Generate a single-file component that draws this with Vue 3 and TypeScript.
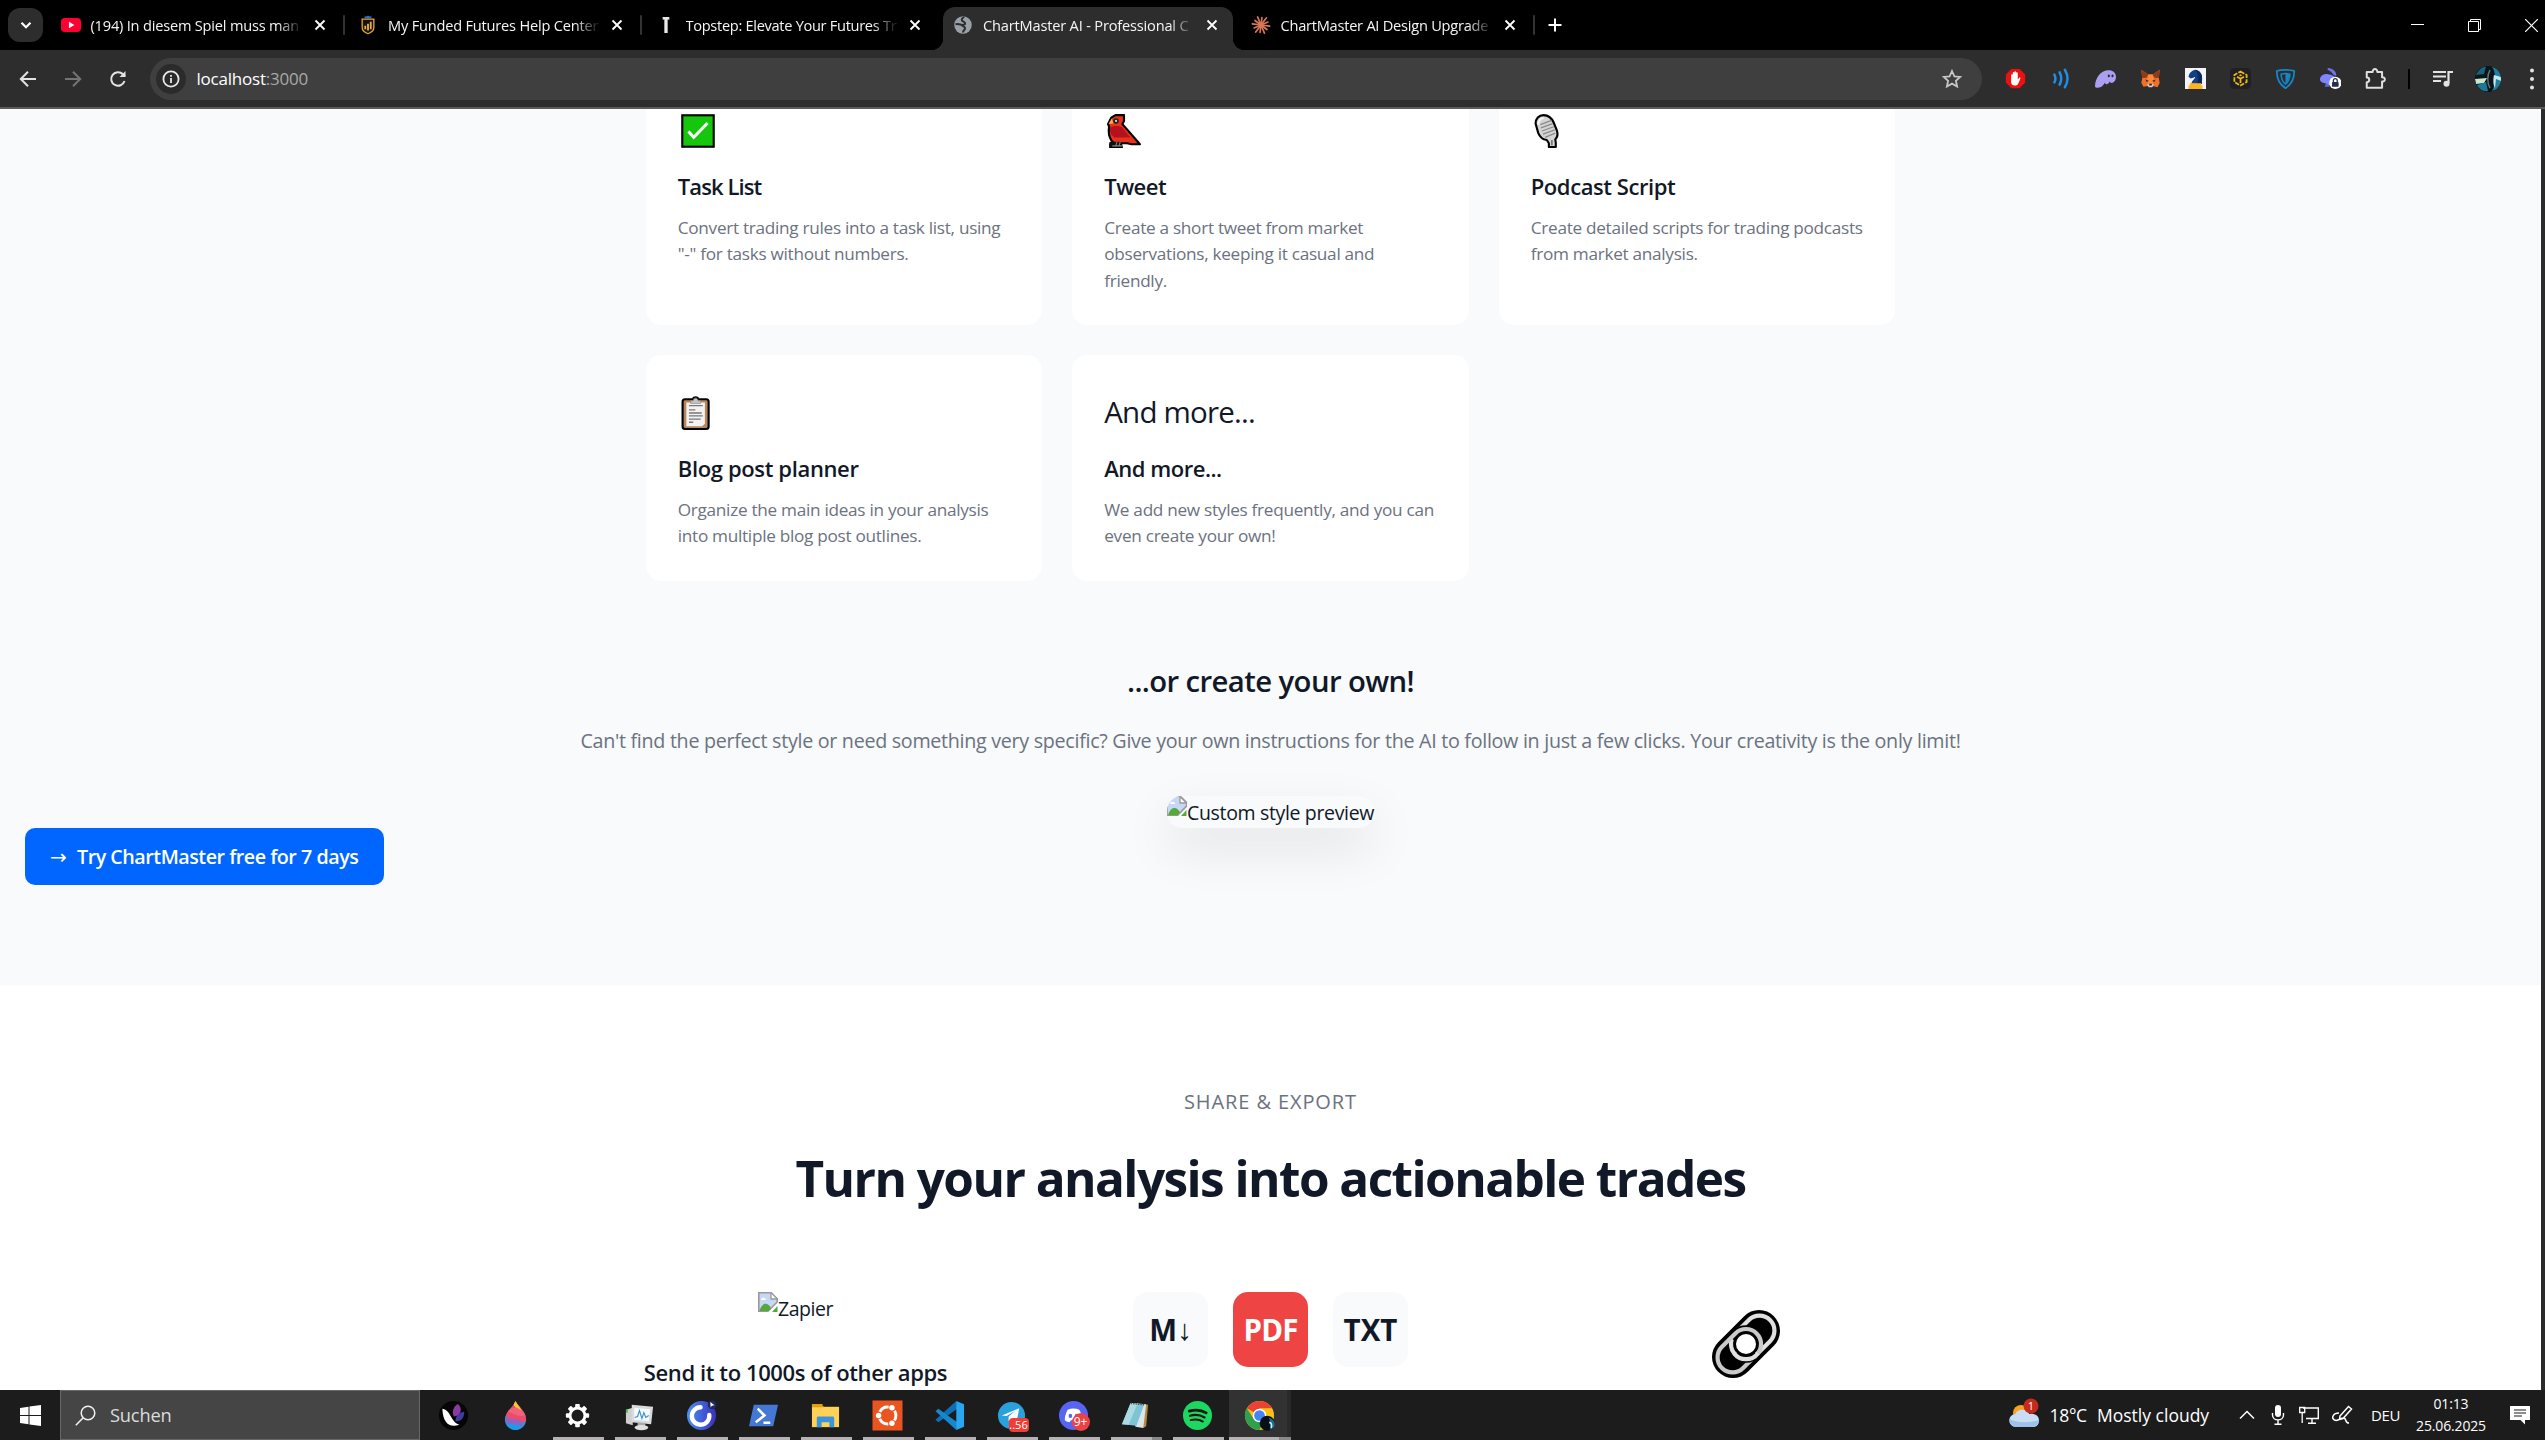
<script setup lang="ts">
interface Tab { icon: string; title: string; track: number; active?: boolean; line?: boolean }
interface StyleCard { icon?: string; emoji?: string; title: string; text: string; track: number }
interface App { icon: string; running?: boolean; active?: boolean; badge?: string; stacked?: boolean }

const tabs: Tab[] = [
  { icon: 'youtube', title: '(194) In diesem Spiel muss man', track: -0.2, line: true },
  { icon: 'funded', title: 'My Funded Futures Help Center', track: -0.2, line: true },
  { icon: 'topstep', title: 'Topstep: Elevate Your Futures Tr', track: -0.3 },
  { icon: 'globe', title: 'ChartMaster AI - Professional C', track: -0.18, active: true },
  { icon: 'claude', title: 'ChartMaster AI Design Upgrade', track: -0.24, line: true },
]

const extensions = ['adblock', 'waves', 'phantom', 'metamask', 'chess', 'cube', 'shield', 'rabbit', 'puzzle']

const cards: StyleCard[] = [
  { icon: 'check', title: 'Task List', text: 'Convert trading rules into a task list, using "-" for tasks without numbers.', track: -0.9 },
  { icon: 'bird', title: 'Tweet', text: 'Create a short tweet from market observations, keeping it casual and friendly.', track: -0.5 },
  { icon: 'mic', title: 'Podcast Script', text: 'Create detailed scripts for trading podcasts from market analysis.', track: -0.42 },
  { icon: 'clipboard', title: 'Blog post planner', text: 'Organize the main ideas in your analysis into multiple blog post outlines.', track: -0.36 },
  { emoji: 'And more...', title: 'And more...', text: 'We add new styles frequently, and you can even create your own!', track: -0.48 },
]

const apps: App[] = [
  { icon: 'petals' },
  { icon: 'drop' },
  { icon: 'gear', running: true },
  { icon: 'monitor', running: true },
  { icon: 'ring', running: true },
  { icon: 'powershell', running: true },
  { icon: 'folder', running: true },
  { icon: 'ubuntu', running: true },
  { icon: 'vscode', running: true },
  { icon: 'telegram', running: true, badge: '..56' },
  { icon: 'discord', running: true, badge: '9+' },
  { icon: 'notepad', running: true, stacked: true },
  { icon: 'spotify', running: true },
  { icon: 'chrome', running: true, active: true, stacked: true },
]

const rays = Array.from({ length: 12 }, (_, i) => {
  const a = (i * Math.PI) / 6 + 0.12
  const r = i % 2 ? 9 : 10.5
  return `<path d="M12 12L${(12 + r * Math.cos(a)).toFixed(2)} ${(12 + r * Math.sin(a)).toFixed(2)}"/>`
}).join('')

const teeth = Array.from({ length: 8 }, (_, i) => `<rect x="13.6" y="4" width="4.8" height="5" rx="1" transform="rotate(${i * 45} 16 16)"/>`).join('')

// Inner markup of each glyph; browser glyphs use a 24 unit box, taskbar and emoji glyphs a 32 unit box.
const glyphs: Record<string, string> = {
  youtube: '<rect x="0" y="3.5" width="24" height="17" rx="4.5" fill="#ff0033"/><path d="M9.5 8.2L16 12l-6.5 3.8z" fill="#fff"/>',
  funded: '<path d="M8 .5l1.5 1.5L12 .5 14.500 2 16 .5v3.500H8z" fill="#2d6fd0"/><path d="M5 5h14v10c0 4-3 6-7 7.500C8 21 5 19 5 15z" fill="#191204" stroke="#dfa73b" stroke-width="1.600"/><path d="M8.700 17v-4M12 18.500v-8M15.300 17V8" stroke="#e5b04a" stroke-width="2.200"/>',
  topstep: '<path d="M8 2.500h8v3.200l-2-.4v16.200h-4V5.300L8 5.700z" fill="#e8e8e8"/>',
  globe: '<circle cx="12" cy="12" r="10.500" fill="#9aa0a9"/><path d="M13.500 2.500c-3 1-3.500 3-2.500 4.500 1.300 1.200 3.500 1 3.500 3 0 1.500-1.500 2-3 2-1.700 0-3-1.500-8.500-1M11 12c0 2.500 3.500 1.500 3.500 4 0 2-2.500 2-2.500 5" fill="none" stroke="#2d2d2d" stroke-width="2.400"/>',
  claude: `<g stroke="#d97757" stroke-width="2" stroke-linecap="round">${rays}</g>`,
  adblock: '<path d="M7.300 1h9.400L23 7.300v9.400L16.700 23H7.300L1 16.700V7.300z" fill="#ed1010"/><path d="M7 13V8a.9.9 0 0 1 1.900 0V5.500a.9.9 0 0 1 1.900 0V4.800a.9.9 0 0 1 1.900 0v1a.9.9 0 0 1 1.900 0V13l1.400-1.600c.8-1 2-.5 1.600.6l-2.400 5.700c-.7 1.600-1.800 2.300-4 2.300-3 0-4.200-1.600-4.200-4z" fill="#fff"/>',
  waves: '<g fill="none" stroke="#1e8fe8" stroke-width="2.800" stroke-linecap="round"><path d="M5 7.500c1.600 3 1.600 6 0 9M11 5c2.400 4.600 2.400 9.400 0 14M17 2c4 6.600 4 13.400 0 20"/></g>',
  phantom: '<path d="M0 21C0 11 7 2.500 15.500 2.500c5 0 8.500 3 8.500 7.500 0 4-2.500 7-5 7-1.200 0-1.700-.6-2-1.500-1 1.800-2.200 3-3.700 3-1.200 0-1.800-.7-2-1.600C9.300 20.500 6.700 22.500 3.500 22.500 1.500 22.500 0 22 0 21z" fill="#ab9ff2"/><ellipse cx="15.800" cy="9" rx="1.200" ry="1.600" fill="#2b2540"/><ellipse cx="20" cy="9" rx="1.200" ry="1.600" fill="#2b2540"/>',
  metamask: '<path d="M1.500 2l8 5.500h5l8-5.500-1 9.500 1 5.500-2.500 5-5.500-1.500h-5L4 21.500 1.500 17l1-5.500z" fill="#f0702a"/><path d="M1.500 2l8 5.500-2 3.500-5 .5zM22.500 2l-8 5.500 2 3.500 5 .5z" fill="#8f3a18"/><path d="M9.500 7.500h5l1.500 8-2 4h-4l-2-4z" fill="#ff8a3c"/><path d="M6 13l4 1.500-2 1.700zM18 13l-4 1.500 2 1.700z" fill="#26303c"/><path d="M8 18.500h8l-2 3.500h-4z" fill="#d8d0c8"/><path d="M10.500 18h3v2h-3z" fill="#222"/>',
  chess: '<rect width="24" height="24" fill="#f3f5fa"/><path d="M4 10c1-5 4-7 8-8 5 1 8 5 7.500 11-.3 2-.5 3 0 5h-12c0-4 4-5 4-8-2 1-3.500 2-5 2z" fill="#123f85"/><path d="M12 2c5 1 8 5 7.500 11-.3 2-.5 3 0 5h-6c2-5 2-11-1.500-16z" fill="#0a2a5c"/><path d="M5.500 17.500h13v2.500h1.500V24H4v-4h1.500z" fill="#ffb21c"/>',
  cube: '<rect width="24" height="24" rx="5" fill="#1e2026"/><g fill="none" stroke="#f0b90b" stroke-width="2"><path d="M12 4l7 4v8l-7 4-7-4V8z" stroke-dasharray="5 1.500"/><path d="M8 10l4 2.300 4-2.300M12 12.300V17"/></g><path d="M12 7l2 1.200-2 1.200-2-1.200z" fill="#f0b90b"/>',
  shield: '<path d="M2 3.500C6 1.500 18 1.500 22 3.500c0 8-2.500 15-10 19.500C4.500 18.500 2 11.500 2 3.500z" fill="none" stroke="#1487c9" stroke-width="2"/><path d="M7 7c3-1 7-1 10 0 0 4.500-1.500 8.500-5 11.500-3.500-3-5-7-5-11.500z" fill="none" stroke="#1487c9" stroke-width="1.700"/><path d="M12 6.500V18c3-3 4.200-6.500 4.400-10.500z" fill="#1487c9"/>',
  rabbit: '<path d="M9 0c6 .5 10 4 9.500 9l-3-1C14 5.500 12 3.500 8.500 2z" fill="#6d72e8"/><path d="M0 13c0-4 4-6.500 9-6 6 .5 10 4 10 8 0 3-2 5-5 5H6l1-2.500C3 17 0 15.500 0 13z" fill="#7f84ff"/><path d="M5 21.500l3-4 3 4z" fill="#6266d8"/><circle cx="17.500" cy="17" r="7" fill="#fff"/><rect x="13.700" y="16" width="7.600" height="5.500" rx="1" fill="#23324c"/><path d="M15.300 16v-1.700a2.200 2.200 0 0 1 4.400 0V16" fill="none" stroke="#23324c" stroke-width="1.500"/>',
  puzzle: '<path d="M2 4.500h6.800C8.400.2 14.400.2 14 4.500h5.500v6c4.200-.3 4.200 5.300 0 5V22.500H2v-6.300c3.800 0 3.800-5.400 0-5.400z" fill="none" stroke="#dedede" stroke-width="2.300" stroke-linejoin="round"/>',
  check: '<rect x="1.200" y="1.200" width="29.600" height="29.600" fill="#16c60c" stroke="#000" stroke-width="2"/><path d="M7 16.500l5 5.500L25 8.500" fill="none" stroke="#fff" stroke-width="2.800"/>',
  bird: '<path d="M1 9.500L4 3.500 8 1h8v5.500l-1.500 3L31 28.500h-8l-4-1h-6l1 4H3v-3l3-1.500c-4-4-5-9-4-15z" fill="#e8321a" stroke="#000" stroke-width="2" stroke-linejoin="round"/><path d="M2 27l1-1h10l1 5H3z" fill="#111"/><path d="M3 13c3-2.500 8-2 11-.5L22 22H7c-4-3-4.500-5-4-9z" fill="#b4101e"/><path d="M1.500 9.500L4.500 4l1.500 5z" fill="#f9b233"/><circle cx="8.500" cy="6.500" r="2.600" fill="#222"/><circle cx="8.500" cy="6.500" r="1" fill="#ddd"/><path d="M9.500 26l-1.200 4M12.500 26l-1.200 4M5 30h9" stroke="#888" stroke-width="1"/>',
  mic: '<path d="M1.500 9C1.500 4.500 4.500 1 9 1c4.500 0 7.500 2.500 9.500 7l3 7.500c1.200 3.500.5 6.500-1.500 8.500l.5 3V31h-6.500v-3.500L12 24.500C8 24 5.500 21.500 4 18z" fill="#d4d4d4" stroke="#000" stroke-width="2" stroke-linejoin="round"/><g stroke="#8b8b8b" stroke-width="1.200"><path d="M6 10l10.500-4M6.500 13l11-4M7.500 16l11-4M8.500 19l11-4M10.500 22l9.500-4"/></g><path d="M4 10c.3-3.500 2-5.800 5-6.200" fill="none" stroke="#f5f5f5" stroke-width="2"/><path d="M16.800 24.500v5" stroke="#777" stroke-width="1.600"/>',
  clipboard: '<rect x="1.500" y="3" width="24.500" height="28" rx="2.300" fill="#b9855a" stroke="#000" stroke-width="2"/><path d="M5 6h17.500v20l-2.500 2.500H5z" fill="#f2f2f2"/><path d="M9 7V4.500h2.500C11.500 1.500 16 1.500 16 4.500h2.500V7z" fill="#c4c4c4" stroke="#888" stroke-width=".6"/><path d="M11 2.500c.8-2 4.700-2 5.500 0" fill="none" stroke="#000" stroke-width="1.500"/><g stroke="#777" stroke-width="1.200"><path d="M7.500 9h13M7.500 13h6M7.500 16h12M7.500 18.800h13M7.500 21.700h11M7.500 24.700h4"/></g>',
  petals: '<circle cx="16" cy="16" r="15" fill="#050505"/><path d="M16.500 17c-3-5 0-11 4-13 4 3 4 9 0 12z" fill="#8a3aa0"/><path d="M18 22c0-6 4-9.500 9-10 .5 6-3 10-9 10z" fill="#3e3da0"/><path d="M22 25.500C12 29 5 24 4.500 9c4 .5 6 3 8.500 7.500 2 3.500 4 7.500 9 9z" fill="#fff"/>',
  drop: '<path d="M16 1c3 6 11 11 11 19 0 6-5 11-11 11S5 26 5 20C5 13 13 9 16 1z" fill="#1f9be6"/><path d="M16 1c3 6 11 11 11 19l-2 4c-6-6-14 0-19-8C8 10 14 7 16 1z" fill="#ee4a6c"/><path d="M5.500 17c5 5 11 1 16 5 2 2 2.500 4 1 6-5-5-11 0-17-6z" fill="#8e63c7"/><path d="M16 1c1.500 4 5 6 6 10-4 0-6-3-8-6z" fill="#ffc71f"/><path d="M8 12c5 0 8 6 18 4-2-5-6-6-8-8-4 0-7 0-10 4z" fill="#f2637b"/>',
  gear: `<g fill="#fff">${teeth}</g><circle cx="16" cy="16" r="7.700" fill="none" stroke="#fff" stroke-width="3"/>`,
  monitor: '<path d="M2 10l7-2v18l-7-2z" fill="#cfcfcf"/><path d="M2 10h2v3H2z" fill="#37c837"/><path d="M8 5l22 2-2 18-20-2z" fill="#d8dadc"/><path d="M10.500 8l16.500 1.500-1.500 12.500-15-1.500z" fill="#f4fbff"/><path d="M11 18l3-1 2-6 2.500 8 2-6 2 5 3-2" fill="none" stroke="#3a8fc9" stroke-width="1.200"/><path d="M14 23l8 .8v4H14z" fill="#aaa"/><ellipse cx="18" cy="28.500" rx="7" ry="2.700" fill="#e0e0e0"/>',
  ring: '<defs><linearGradient id="ringShade"><stop offset="0" stop-color="#4a90f0"/><stop offset="1" stop-color="#3a2fc0"/></linearGradient></defs><circle cx="16" cy="16" r="15" fill="url(#ringShade)"/><path d="M15 7.500a9 9 0 1 0 9 8" fill="none" stroke="#fff" stroke-width="4.500" stroke-linecap="round"/><circle cx="27" cy="5" r="4.500" fill="#20285c"/><path d="M25 2l4.500 3.500-3 .5-1 2z" fill="#fff"/>',
  powershell: '<path d="M6 5h25l-5 22H1z" fill="#4379d4"/><path d="M10 9l7 7-9 7M16 23.500h7" fill="none" stroke="#fff" stroke-width="2.600"/>',
  folder: '<path d="M2 7h28v21H2z" fill="#ffd257"/><path d="M2 4h11v2l2 1.500H2z" fill="#e3a008"/><path d="M7 28v-9c0-1.500.6-2 2-2h14c1.500 0 2 .6 2 2v9h-5v-5h-8v5z" fill="#3a95de"/>',
  ubuntu: '<rect x=".5" y=".5" width="31" height="31" fill="#e95420"/><circle cx="16" cy="16" r="8.700" fill="none" stroke="#fff" stroke-width="3" stroke-dasharray="11 7.220" stroke-dashoffset="5.500"/><circle cx="6.800" cy="16" r="2.800" fill="#fff"/><circle cx="20.600" cy="8" r="2.800" fill="#fff"/><circle cx="20.600" cy="24" r="2.800" fill="#fff"/>',
  vscode: '<path d="M23 1L1.500 20.500 4.500 23 24 9z" fill="#0f6fb5"/><path d="M23 31L1.500 11.500 4.500 9 24 23z" fill="#1587cf"/><path d="M23 1l8 3.500v23L23 31z" fill="#2aa6f0"/>',
  telegram: '<circle cx="16" cy="16" r="14" fill="#2aa1dc"/><path d="M6 16L24 8.500l-3 15-5.500-4L13 22v-5l7-6-9 5.500z" fill="#fff"/>',
  discord: '<circle cx="16" cy="16" r="15" fill="#5865f2"/><path d="M10 10c4-1.500 8-1.500 12 0 2 3.500 3 7 3 11-2 1.500-3.500 2-5 2l-1.200-2h-5.600L12 23c-1.500 0-3-.5-5-2 0-4 1-7.500 3-11z" fill="#fff"/><ellipse cx="12.800" cy="16.500" rx="1.900" ry="2.200" fill="#5865f2"/><ellipse cx="19.200" cy="16.500" rx="1.900" ry="2.200" fill="#5865f2"/>',
  notepad: '<path d="M12 3l17 2-2 22-3 2z" fill="#b58a3c"/><path d="M11 3l16 1.500-3 24.500-8-1.500z" fill="#d9e6ea"/><path d="M11 3l14 1.500-8 22L2 25z" fill="#7fc4d2"/><path d="M11 3l7 .8L9 25.500 2 25z" fill="#a9dbe3"/><path d="M11 3.500l15 1.500" stroke="#555" stroke-width="1.500" stroke-dasharray="1.500 1"/>',
  spotify: '<circle cx="16" cy="16" r="15" fill="#1ed760"/><g fill="none" stroke="#161616" stroke-linecap="round"><path d="M7.500 11.500c6-1.700 12.500-1.200 17.500 1.800" stroke-width="2.800"/><path d="M8.300 16.300c5-1.400 10.700-.9 15 1.700" stroke-width="2.300"/><path d="M9 20.800c4.300-1.100 9-.7 12.700 1.500" stroke-width="1.900"/></g>',
  chrome: '<circle cx="16" cy="16" r="15" fill="#fbc116"/><path d="M16 16L3 8.500A15 15 0 0 1 29 8.500H16z" fill="#ea4335"/><path d="M3 8.500A15 15 0 0 0 16 31l6-11.500H10z" fill="#30a04e"/><circle cx="16" cy="16" r="7" fill="#fff"/><circle cx="16" cy="16" r="5.500" fill="#4285f4"/><circle cx="24" cy="24" r="7.800" fill="#071018"/><path d="M25.500 18c5 2 7 5 6 9-2 3-5 4-5 4 2-4 1-9-1-13z" fill="#1c6f8c"/><path d="M26 23c2 0 3 3 2 6" stroke="#c8eef5" stroke-width="1.800" fill="none"/>',
}
</script>

<template>
  <div class="screen">
    <header class="tabstrip">
      <div class="tab-search">
        <svg width="14" height="14" viewBox="0 0 14 14"><path d="M2.500 4.800L7 9.300l4.500-4.500" fill="none" stroke="#fff" stroke-width="2.200" /></svg>
      </div>
      <div v-for="t in tabs" :key="t.title" class="tab" :class="{ active: t.active }">
        <svg class="favicon" viewBox="0 0 24 24" v-html="glyphs[t.icon]"></svg>
        <span class="tab-title" :style="{ letterSpacing: t.track + 'px' }">{{ t.title }}</span>
        <svg class="tab-close" viewBox="0 0 12 12"><path d="M1.500 1.500l9 9M10.500 1.500l-9 9" stroke="#fff" stroke-width="1.800" /></svg>
        <i class="tab-line" :class="{ shown: t.line }"></i>
      </div>
      <svg class="new-tab" viewBox="0 0 14 14"><path d="M7 .5v13M.5 7h13" stroke="#fff" stroke-width="2" /></svg>
      <div class="window-controls">
        <span><svg width="13" height="13" viewBox="0 0 13 13"><path d="M0 5.500h13" stroke="#fff" /></svg></span>
        <span><svg width="13" height="13" viewBox="0 0 13 13"><path d="M.5 2.500h10v10H.5zM2.500 2.500v-2h10v10h-2" fill="none" stroke="#fff" /></svg></span>
        <span><svg width="13" height="13" viewBox="0 0 13 13"><path d="M0 0l13 13M13 0L0 13" stroke="#fff" stroke-width="1.200" /></svg></span>
      </div>
    </header>

    <div class="toolbar">
      <svg class="nav" viewBox="0 0 18 18"><path d="M17 9H2M9 1.800L1.800 9 9 16.200" fill="none" stroke="#e3e3e3" stroke-width="2" /></svg>
      <svg class="nav" viewBox="0 0 18 18"><path d="M1 9h15M9 1.800L16.200 9 9 16.200" fill="none" stroke="#747474" stroke-width="2" /></svg>
      <svg class="nav" viewBox="0 0 18 18"><path d="M15.500 11A6.800 6.800 0 1 1 14 4.300l2 2" fill="none" stroke="#e3e3e3" stroke-width="2" /><path d="M16.500 1v6h-6z" fill="#e3e3e3" /></svg>
      <div class="omnibox">
        <span class="site-info">
          <svg width="18" height="18" viewBox="0 0 18 18"><circle cx="9" cy="9" r="7.600" fill="none" stroke="#e8e8e8" stroke-width="1.800" /><path d="M9 8v5M9 5v1.800" stroke="#e8e8e8" stroke-width="1.800" /></svg>
        </span>
        <span class="url">localhost<b>:3000</b></span>
        <svg class="star" viewBox="0 0 20 20"><path d="M10 2l2.400 5.300 5.800.6-4.300 3.900 1.200 5.700-5.100-2.900-5.100 2.900 1.200-5.700L1.800 7.900l5.800-.6z" fill="none" stroke="#c7c7c7" stroke-width="1.800" /></svg>
      </div>
      <div class="extensions">
        <span v-for="e in extensions" :key="e"><svg viewBox="0 0 24 24" v-html="glyphs[e]"></svg></span>
      </div>
      <i class="toolbar-line"></i>
      <svg class="media" viewBox="0 0 20 20"><path d="M0 3h13M0 7.500h13M0 12h8" stroke="#e3e3e3" stroke-width="2" /><path d="M20 3h-4.500v11" fill="none" stroke="#e3e3e3" stroke-width="2.200" /><circle cx="13.500" cy="14.800" r="3" fill="#e3e3e3" /></svg>
      <svg class="avatar" viewBox="0 0 26 26">
        <clipPath id="face"><circle cx="13" cy="13" r="13" /></clipPath>
        <g clip-path="url(#face)">
          <path d="M0 0h26v26H0z" fill="#0b1419" />
          <path d="M1 9C3 4 7 1 11 .5L9 8z" fill="#12657c" /><path d="M0 13l12-1-3 5-8 1z" fill="#c9e6d0" /><path d="M2 19l9-3 2 9c-5 1-9-2-11-6z" fill="#1c7896" />
          <path d="M17 1c4 4 4 18 0 24l9-3V3z" fill="#1f7f9d" /><path d="M15 4c-3 5-3 13 0 18" fill="none" stroke="#5f7076" stroke-width="1.500" /><path d="M19 9l7 2v4l-5-2-1 9c-2-3-2-9-1-13z" fill="#c4e6ec" />
        </g>
      </svg>
      <svg class="more" viewBox="0 0 4 22"><circle cx="2" cy="2.500" r="2" fill="#e3e3e3" /><circle cx="2" cy="11" r="2" fill="#e3e3e3" /><circle cx="2" cy="19.500" r="2" fill="#e3e3e3" /></svg>
    </div>

    <div class="viewport">
      <main class="page">
        <section class="styles">
          <div class="cards">
            <article v-for="c in cards" :key="c.title" class="card">
              <div class="card-icon">
                <svg v-if="c.icon" viewBox="0 0 32 32" v-html="glyphs[c.icon]"></svg>
                <template v-else>{{ c.emoji }}</template>
              </div>
              <h4 :style="{ letterSpacing: c.track + 'px' }">{{ c.title }}</h4>
              <p>{{ c.text }}</p>
            </article>
          </div>
          <h3>...or create your own!</h3>
          <p class="lead">Can't find the perfect style or need something very specific? Give your own instructions for the AI to follow in just a few clicks. Your creativity is the only limit!</p>
          <div class="preview">
            <svg width="20" height="20" viewBox="0 0 20 20"><path d="M0 0h13l6.500 6.500V10L10 20H0z" fill="#c6d8f6" stroke="#9a9a9a" stroke-width="1.600" /><path d="M13 .5V7h6.500z" fill="#fff" stroke="#9a9a9a" stroke-width="1.300" /><path d="M3 8c0-3 5-3 5 0z" fill="#fff" /><path d="M1 19.500c2-9 9-10 12-3l-3 3z" fill="#56a83c" /><path d="M19.500 14v6H14z" fill="#56a83c" /></svg>
            <span>Custom style preview</span>
          </div>
          <a class="cta"><span class="arrow">→</span>Try ChartMaster free for 7 days</a>
        </section>

        <section class="share">
          <div class="eyebrow">SHARE &amp; EXPORT</div>
          <h2>Turn your analysis into actionable trades</h2>
          <div class="share-grid">
            <div class="share-col">
              <div class="broken">
                <svg width="20" height="20" viewBox="0 0 20 20"><path d="M.800.800h12.200l6.200 6.200V10L10 19.200H.800z" fill="#c6d8f6" stroke="#9a9a9a" stroke-width="1.600" /><path d="M13 .5V7h6.500z" fill="#fff" stroke="#9a9a9a" stroke-width="1.300" /><path d="M3 8c0-3 5-3 5 0z" fill="#fff" /><path d="M1.500 19c2-8.500 8.500-9.500 11.500-2.500l-2.500 2.500z" fill="#56a83c" /><path d="M19.500 14v6H14z" fill="#56a83c" /></svg>
                <span>Zapier</span>
              </div>
              <h4>Send it to 1000s of other apps</h4>
            </div>
            <div class="share-col formats">
              <span class="fmt">M<i>↓</i></span>
              <span class="fmt pdf">PDF</span>
              <span class="fmt">TXT</span>
            </div>
            <div class="share-col link">
              <svg width="70" height="70" viewBox="0 0 70 70">
                <g transform="translate(35 35) rotate(-45)" fill="none">
                  <rect x="-39.400" y="-21" width="78.800" height="42" rx="21" fill="#000" />
                  <rect x="-15" y="-15" width="49" height="30" rx="15" stroke="#e0e0e0" stroke-width="4.200" />
                  <path d="M-19-15H0a15 15 0 0 1 0 30H-19a15 15 0 0 1 0-30z" stroke="#000" stroke-width="7.500" stroke-dasharray="0 13 36 200" />
                  <rect x="-34" y="-15" width="49" height="30" rx="15" stroke="#c9c9c9" stroke-width="4.200" />
                  <path d="M-15 0A15 15 0 0 0 0 15" stroke="#000" stroke-width="7.500" />
                  <path d="M-15 -2A15 15 0 0 0 2 15" stroke="#e0e0e0" stroke-width="4.200" />
                  <circle r="10" fill="#fff" />
                </g>
              </svg>
            </div>
          </div>
        </section>
      </main>
      <aside class="edge"></aside>
    </div>

    <footer class="taskbar">
      <div class="start">
        <svg width="21" height="21" viewBox="0 0 21 21" fill="#fff"><path d="M0 3l8.500-1.200V10H0zM9.500 1.600L21 0v10H9.500zM0 11h8.500v8.200L0 18zM9.500 11H21v10L9.500 19.400z" /></svg>
      </div>
      <div class="search">
        <svg width="21" height="21" viewBox="0 0 21 21"><circle cx="13" cy="8" r="6.800" fill="none" stroke="#f0f0f0" stroke-width="1.500" /><path d="M8 13L.8 20.200" stroke="#f0f0f0" stroke-width="1.600" /></svg>
        <span>Suchen</span>
      </div>
      <div v-for="a in apps" :key="a.icon" class="app" :class="{ running: a.running, active: a.active, stacked: a.stacked }">
        <svg viewBox="0 0 32 32" v-html="glyphs[a.icon]"></svg>
        <span v-if="a.badge" class="badge" :class="a.icon">{{ a.badge }}</span>
      </div>
      <div class="tray">
        <svg class="weather" viewBox="0 0 32 32">
          <circle cx="13" cy="15" r="8" fill="#f7a51c" />
          <path d="M8 29a6.500 6.500 0 0 1-.5-13c1-5 11-6.500 13.500 0 6-1 10 2 10 6.500S28 29 25 29z" fill="#c9def5" /><path d="M8 29a6.500 6.500 0 0 1-6-8c6 4 20 4 29 1-.3 4-3 7-6 7z" fill="#9fc2ea" />
          <circle cx="23" cy="8" r="7.500" fill="#c42b1c" />
          <text x="23" y="12" text-anchor="middle" font-family="Open Sans, sans-serif" font-size="11" fill="#fff">1</text>
        </svg>
        <span class="temp">18°C</span>
        <span class="sky">Mostly cloudy</span>
        <svg class="t-chev" viewBox="0 0 16 16"><path d="M1 11.500L8 4.500l7 7" fill="none" stroke="#fff" stroke-width="1.500" /></svg>
        <svg class="t-mic" viewBox="0 0 14 20"><rect x="4" y="0" width="6" height="12" rx="3" fill="#fff" /><path d="M1.500 8v2c0 6.500 11 6.500 11 0V8M7 15v5M3.500 19.300h7" fill="none" stroke="#fff" stroke-width="1.400" /></svg>
        <svg class="t-net" viewBox="0 0 20 20"><path d="M4 3h15.300v10.500H7M13 13.500V18M9 18.300h8" fill="none" stroke="#fff" stroke-width="1.400" /><path d="M.7 2.500h5v5h-5zM3.200 7.500V18" fill="none" stroke="#fff" stroke-width="1.300" /></svg>
        <svg class="t-pen" viewBox="0 0 22 20"><path d="M8 11L16.500 1.500l3 2.500L11 13.500l-3.500 1zM7 8c-6 0-8 5-4.500 7 4 2 6-3 9.500-2 3 1 .5 5 5 5" fill="none" stroke="#fff" stroke-width="1.500" /></svg>
        <span class="lang">DEU</span>
        <div class="clock"><span>01:13</span><span>25.06.2025</span></div>
        <svg class="t-note" viewBox="0 0 20 20"><path d="M0 1h20v14h-5v4.500L10.500 15H0z" fill="#fff" /><path d="M4 5h12M4 8h12M4 11h8" stroke="#1c1c1c" stroke-width="1.200" /></svg>
      </div>
    </footer>
  </div>
</template>

<style>
body { margin: 0; background: #fff; }
</style>

<style scoped>
.screen { width: 2545px; height: 1440px; display: flex; flex-direction: column; overflow: hidden; font-family: "Open Sans", "Noto Sans", sans-serif; color: #111827; }
svg { display: block; flex: none; }
h2, h3, h4, p { margin: 0; }

.tabstrip { height: 50px; flex: none; background: #000; display: flex; align-items: center; overflow: hidden; }
.tab-search { width: 35px; height: 34px; border-radius: 12px; background: #2d2d2d; margin-left: 8px; margin-right: 7.500px; display: flex; align-items: center; justify-content: center; flex: none; }
.tab { width: 297.500px; height: 50px; flex: none; display: flex; align-items: center; position: relative; box-sizing: border-box; padding-left: 10px; }
.tab.active::before { content: ""; position: absolute; left: 0; top: 7px; width: 290px; height: 43px; background: #2d2d2d; border-radius: 12px 12px 0 0; }
.tab.active::after { content: ""; position: absolute; left: -12px; bottom: 0; width: 314px; height: 12px; background: radial-gradient(circle at 0 0, transparent 12px, #2d2d2d 12.500px) left / 12px 12px no-repeat, radial-gradient(circle at 100% 0, transparent 12px, #2d2d2d 12.500px) right / 12px 12px no-repeat; }
.favicon { width: 20px; height: 20px; margin-right: 10px; position: relative; z-index: 1; }
.tab-title { width: 212px; overflow: hidden; white-space: nowrap; font-size: 14.600px; color: #f5f5f5; line-height: 24px; margin-right: -4px; position: relative; z-index: 1; mask-image: linear-gradient(90deg, #000 88%, rgba(0, 0, 0, 0.150) 98%); }
.tab-close { width: 12px; height: 12px; margin-left: 15px; position: relative; z-index: 1; }
.tab-line { width: 2px; height: 20px; margin-left: 17px; border-radius: 1px; }
.tab-line.shown { background: #333; }
.new-tab { width: 14px; height: 14px; margin-left: 10px; }
.window-controls { margin-left: auto; margin-right: -15px; display: flex; flex: none; }
.window-controls span { width: 57px; height: 50px; display: flex; align-items: center; justify-content: center; }

.toolbar { height: 57px; flex: none; background: #2d2d2d; border-bottom: 2px solid #5b5b5b; display: flex; align-items: center; }
.nav { width: 18px; height: 18px; margin-left: 18.500px; margin-right: 8.500px; }
.omnibox { width: 1831.500px; height: 42px; border-radius: 21px; background: #3f3f3f; margin-left: 15px; display: flex; align-items: center; box-sizing: border-box; padding: 0 20px 0 6px; flex: none; }
.site-info { width: 30px; height: 30px; border-radius: 50%; background: #2b2b2b; display: flex; align-items: center; justify-content: center; }
.url { font-size: 17px; letter-spacing: -0.220px; color: #fff; margin-left: 10.500px; line-height: 26px; margin-top: 1px; }
.url b { font-weight: 400; color: #a9a9a9; }
.star { width: 20px; height: 20px; margin-left: auto; }
.extensions { display: flex; margin-left: 11px; }
.extensions span { width: 45.100px; display: flex; justify-content: center; }
.extensions svg { width: 21px; height: 21px; }
.toolbar-line { width: 2px; height: 20px; background: #000; margin-left: 10px; }
.media { width: 20px; height: 20px; margin-left: 23px; }
.avatar { width: 26px; height: 26px; margin-left: 22px; }
.more { width: 4px; height: 22px; margin-left: 29px; }

.viewport { flex: 1; min-height: 0; display: flex; overflow: hidden; }
.page { width: 2541px; flex: none; background: #fff; }
.edge { flex: 1; background: #2b2b2b; }

.styles { background: #f8fafc; height: 876px; box-sizing: border-box; padding-bottom: 100px; display: flex; flex-direction: column; align-items: center; }
.cards { width: 1249.500px; margin-top: -36px; display: grid; grid-template-columns: repeat(3, 1fr); gap: 30px; }
.card { background: #fff; border-radius: 15px; padding: 31px 30.500px 30.800px 32px; }
.card-icon { height: 51px; line-height: 51px; font-size: 29.500px; letter-spacing: -0.800px; display: flex; align-items: center; }
.card-icon svg { width: 34px; height: 34px; margin-left: 3px; position: relative; top: 1px; }
.card h4 { margin-top: 16px; font-size: 22px; line-height: 30px; font-weight: 600; }
.card p { margin-top: 14px; font-size: 17.200px; line-height: 26.400px; letter-spacing: -0.290px; color: #6b7280; }
.styles h3 { margin-top: 80px; font-size: 29.300px; line-height: 40px; font-weight: 600; letter-spacing: -0.600px; }
.lead { margin-top: 24px; font-size: 19.700px; line-height: 32px; letter-spacing: -0.290px; color: #6b7280; white-space: nowrap; }
.preview { margin-top: 39px; width: 207px; height: 32px; border-radius: 15px; box-shadow: 0 20px 50px rgba(0, 0, 0, 0.1); background: #f8fafc; display: flex; font-size: 19.500px; line-height: 34px; letter-spacing: -0.340px; white-space: nowrap; flex: none; }
.preview svg { border-top-left-radius: 15px; }
.cta { align-self: flex-start; margin-left: 25px; width: 359px; height: 57px; box-sizing: border-box; padding-left: 25px; border-radius: 10px; background: #0066ff; color: #fff; display: flex; align-items: center; font-size: 19.700px; font-weight: 600; letter-spacing: -0.480px; white-space: nowrap; flex: none; }
.arrow { width: 27px; font-family: "DejaVu Sans", sans-serif; font-size: 20px; font-weight: 400; padding-top: 1px; }

.share { padding-top: 101px; display: flex; flex-direction: column; align-items: center; }
.eyebrow { font-size: 20px; line-height: 32px; letter-spacing: 0.900px; color: #6b7280; }
.share h2 { margin-top: 30px; font-size: 49.500px; line-height: 60px; font-weight: 700; letter-spacing: -1.550px; }
.share-grid { margin-top: 84px; width: 1375px; display: grid; grid-template-columns: repeat(3, 1fr); gap: 50px; }
.share-col { display: flex; flex-direction: column; align-items: center; }
.broken { display: flex; height: 32px; line-height: 34px; font-size: 19.500px; letter-spacing: -0.500px; }
.share-col h4 { margin-top: 30px; font-size: 22px; line-height: 36px; font-weight: 600; letter-spacing: -0.400px; }
.formats { flex-direction: row; align-items: flex-start; justify-content: center; gap: 25px; }
.fmt { width: 75px; height: 75px; border-radius: 15px; background: #f8fafc; display: flex; align-items: center; justify-content: center; font-size: 29.500px; font-weight: 700; }
.fmt i { font-style: normal; font-weight: 400; font-family: "Liberation Serif", serif; font-size: 29px; line-height: 30px; }
.fmt.pdf { background: #ef4444; color: #fff; letter-spacing: -0.800px; }
.link { padding-top: 17px; }

.taskbar { height: 50px; flex: none; background: #1c1c1c; display: flex; align-items: stretch; overflow: hidden; }
.start { width: 60px; display: flex; align-items: center; justify-content: center; }
.search { width: 360px; box-sizing: border-box; background: #454545; border: 1px solid #686868; display: flex; align-items: center; padding-left: 14px; margin-right: 2.500px; }
.search span { margin-left: 14px; font-size: 18.300px; line-height: 24px; margin-top: -1px; letter-spacing: -0.200px; color: #dcdcdc; }
.app { width: 62px; flex: none; display: flex; align-items: center; justify-content: center; position: relative; }
.app svg { width: 31px; height: 31px; }
.app.running::after { content: ""; position: absolute; left: 6px; bottom: 0; width: 51px; height: 3px; background: #b5b1b5; }
.app.active { background: #323232; box-shadow: inset -4px 0 0 #292929; }
.app.active::after { left: 0; width: 62px; }
.app.stacked::after { background: linear-gradient(90deg, #b5b1b5 0 80%, #8a878a 80%); }
.badge { position: absolute; color: #fff; text-align: center; background: #f23c34; }
.badge.telegram { left: 28px; top: 28px; width: 20px; height: 14px; border-radius: 4px; font-size: 11px; line-height: 14px; }
.badge.discord { left: 29px; top: 23px; width: 18px; height: 18px; border-radius: 50%; font-size: 12px; line-height: 17px; background: #ed4245; }

.tray { margin-left: auto; display: flex; align-items: center; color: #fff; font-size: 17.500px; white-space: nowrap; }
.weather { width: 32px; height: 32px; margin-top: -2px; }
.temp { margin-left: 9.500px; width: 39px; letter-spacing: -0.300px; }
.sky { margin-left: 8.500px; width: 112px; }
.t-chev { width: 16px; height: 16px; margin-left: 30px; }
.t-mic { width: 14px; height: 20px; margin-left: 16px; }
.t-net { width: 20px; height: 20px; margin-left: 14px; }
.t-pen { width: 22px; height: 20px; margin-left: 13px; }
.lang { font-size: 15px; letter-spacing: -0.300px; margin-left: 17px; width: 31px; }
.clock { width: 74px; margin-left: 12px; font-size: 14px; letter-spacing: -0.150px; line-height: 22px; display: flex; flex-direction: column; align-items: center; }
.t-note { width: 20px; height: 20px; margin-left: 22px; margin-right: 15px; }
</style>
